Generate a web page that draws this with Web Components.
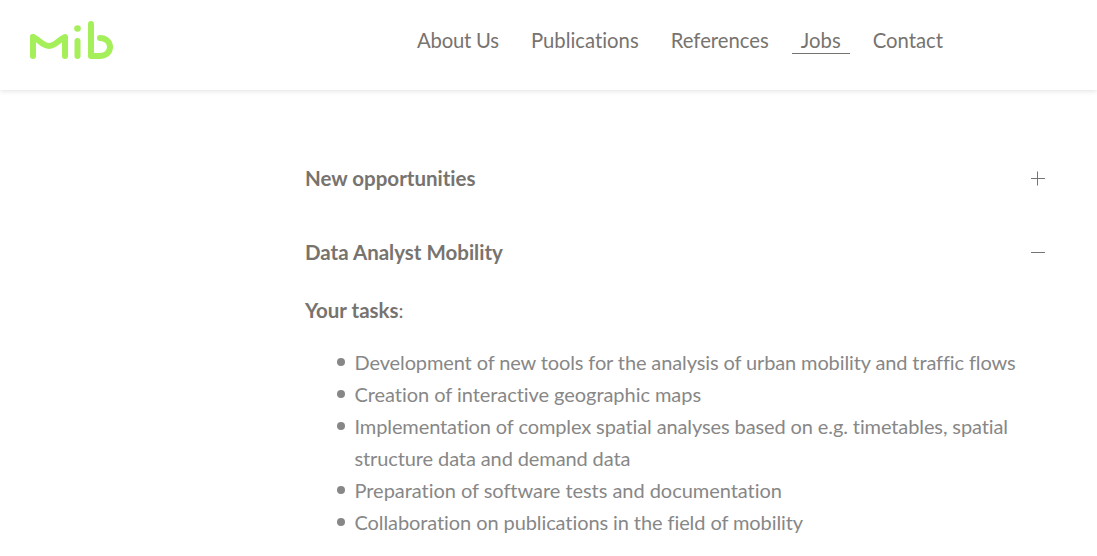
<!DOCTYPE html>
<html>
<head>
<meta charset="utf-8">
<title>Jobs</title>
<style>
    html, body { margin: 0; padding: 0; height: 556px; overflow: hidden; background: #fff; }
    body { font-family: Lato, sans-serif; font-variant-ligatures: none; }
    b { font-size: 20.5px; }
</style>
</head>
<body>
<site-header>
    <nav-link style="letter-spacing:-0.2px">About Us</nav-link>
    <nav-link>Publications</nav-link>
    <nav-link>References</nav-link>
    <nav-link active>Jobs</nav-link>
    <nav-link>Contact</nav-link>
</site-header>
<job-list>
    <job-item title="New opportunities"></job-item>
    <job-item title="Data Analyst Mobility" open>
        <p><b>Your tasks</b>:</p>
        <task-item style="letter-spacing:-0.12px">Development of new tools for the analysis of urban mobility and traffic flows</task-item>
        <task-item style="letter-spacing:-0.05px">Creation of interactive geographic maps</task-item>
        <task-item style="letter-spacing:-0.11px">Implementation of complex spatial analyses based on e.g. timetables, spatial structure data and demand data</task-item>
        <task-item style="letter-spacing:-0.04px">Preparation of software tests and documentation</task-item>
        <task-item style="letter-spacing:-0.09px">Collaboration on publications in the field of mobility</task-item>
    </job-item>
</job-list>

<script>
class SiteHeader extends HTMLElement {
    constructor() {
        super();
        this.attachShadow({ mode: 'open' });
        this.shadowRoot.innerHTML = `
            <style>
                :host {
                    display: flex;
                    align-items: flex-start;
                    box-sizing: border-box;
                    height: 90px;
                    padding: 20px 0 0 29px;
                    background: #fff;
                    box-shadow: 0 1px 5px rgba(0, 0, 0, 0.12);
                }
                svg { display: block; width: 85px; height: 41px; }
                nav { display: flex; margin-left: 294px; margin-top: 8px; }
            </style>
            <svg viewBox="0 0 85 41" fill="none" stroke="#a5f05a" stroke-width="6" stroke-linecap="round" stroke-linejoin="round">
                <path d="M4 17 L4 36"/>
                <path d="M4 17 C10 19 13 26 20 26 C27 26 30 19 36 17 C36 23 36 30 36 36"/>
                <path d="M48.5 21 L48.5 36"/>
                <circle cx="48.5" cy="8.5" r="3.3" fill="#a5f05a" stroke="none"/>
                <path d="M62 4 L62 36 L71 36 C77 36 81 32 81 27 C81 22 77 18 71 18"/>
            </svg>
            <nav><slot></slot></nav>
        `;
    }
}

class NavLink extends HTMLElement {
    constructor() {
        super();
        this.attachShadow({ mode: 'open' });
        this.shadowRoot.innerHTML = `
            <style>
                :host {
                    display: block;
                    padding: 0 9px;
                    margin-right: 14px;
                    font-size: 20.3px;
                    line-height: 25px;
                    color: #77736f;
                    border-bottom: 1px solid transparent;
                    white-space: nowrap;
                }
                :host([active]) { border-bottom-color: #77736f; }
            </style>
            <slot></slot>
        `;
    }
}

class JobList extends HTMLElement {
    constructor() {
        super();
        this.attachShadow({ mode: 'open' });
        this.shadowRoot.innerHTML = `
            <style>
                :host {
                    display: block;
                    width: 740px;
                    margin-left: 305px;
                    padding-top: 69px;
                }
            </style>
            <slot></slot>
        `;
    }
}

class JobItem extends HTMLElement {
    constructor() {
        super();
        this.attachShadow({ mode: 'open' });
        const open = this.hasAttribute('open');
        this.shadowRoot.innerHTML = `
            <style>
                :host { display: block; margin-bottom: 36px; font-size: 20px; line-height: 32px; }
                .head { display: flex; justify-content: space-between; align-items: center; height: 38px; }
                h3 { margin: 0; font-size: 20.5px; font-weight: 700; color: #77736f; }
                svg { width: 15px; height: 15px; display: block; }
                .body { padding-top: 23px; }
                .body[hidden] { display: none; }
                ::slotted(p) { margin: 0 0 20px; color: #77736f; }
            </style>
            <div class="head">
                <h3>${this.getAttribute('title')}</h3>
                <svg viewBox="0 0 15 15" stroke="#77736f" stroke-width="1">
                    <path d="M1 7.5H15"/>
                    ${open ? '' : '<path d="M7.5 0.5V14.5"/>'}
                </svg>
            </div>
            <div class="body" ${open ? '' : 'hidden'}><slot></slot></div>
        `;
    }
}

class TaskItem extends HTMLElement {
    constructor() {
        super();
        this.attachShadow({ mode: 'open' });
        this.shadowRoot.innerHTML = `
            <style>
                :host {
                    display: flex;
                    color: #878787;
                    padding-left: 32px;
                }
                i {
                    flex: none;
                    width: 8px;
                    height: 8px;
                    margin: 12px 9.5px 0 0;
                    border-radius: 50%;
                    background: #878787;
                }
            </style>
            <i></i><div><slot></slot></div>
        `;
    }
}

customElements.define('site-header', SiteHeader);
customElements.define('nav-link', NavLink);
customElements.define('job-list', JobList);
customElements.define('job-item', JobItem);
customElements.define('task-item', TaskItem);
</script>
</body>
</html>
